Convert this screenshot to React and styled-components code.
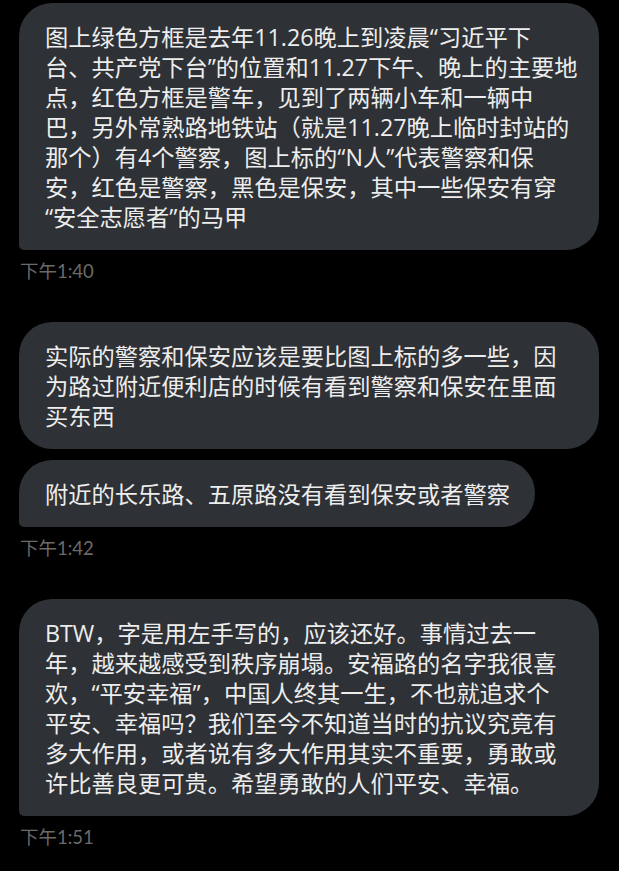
import React from "react";
import styled, { createGlobalStyle } from "styled-components";

const GlobalStyle = createGlobalStyle`
  html, body {
    margin: 0;
    padding: 0;
    background: #000;
  }
  body {
    font-family: "Open Sans", "Noto Sans CJK SC", sans-serif;
  }
`;

const groups = [
  {
    time: "下午1:40",
    messages: [
      [
        "图上绿色方框是去年11.26晚上到凌晨“习近平下",
        "台、共产党下台”的位置和11.27下午、晚上的主要地",
        "点，红色方框是警车，见到了两辆小车和一辆中",
        "巴，另外常熟路地铁站（就是11.27晚上临时封站的",
        "那个）有4个警察，图上标的“N人”代表警察和保",
        "安，红色是警察，黑色是保安，其中一些保安有穿",
        "“安全志愿者”的马甲",
      ],
    ],
  },
  {
    time: "下午1:42",
    messages: [
      [
        "实际的警察和保安应该是要比图上标的多一些，因",
        "为路过附近便利店的时候有看到警察和保安在里面",
        "买东西",
      ],
      ["附近的长乐路、五原路没有看到保安或者警察"],
    ],
  },
  {
    time: "下午1:51",
    messages: [
      [
        "BTW，字是用左手写的，应该还好。事情过去一",
        "年，越来越感受到秩序崩塌。安福路的名字我很喜",
        "欢，“平安幸福”，中国人终其一生，不也就追求个",
        "平安、幸福吗？我们至今不知道当时的抗议究竟有",
        "多大作用，或者说有多大作用其实不重要，勇敢或",
        "许比善良更可贵。希望勇敢的人们平安、幸福。",
      ],
    ],
  },
];

const App = () => {
  return (
    <>
      <GlobalStyle />
      <Page>
        {groups.map((g, gi) => (
          <Group key={gi}>
            <Bubbles>
              {g.messages.map((lines, mi) => (
                <Bubble
                  key={mi}
                  $wide={lines.length > 1}
                  $last={mi === g.messages.length - 1}
                >
                  {lines.map((l, li) => (
                    <Line key={li}>{l}</Line>
                  ))}
                </Bubble>
              ))}
            </Bubbles>
            <Time>{g.time}</Time>
          </Group>
        ))}
      </Page>
    </>
  );
};

export default App;

const Page = styled.div`
  display: flex;
  flex-direction: column;
  gap: 40px;
  padding: 3px 20px 0 19px;
`;

const Group = styled.div`
  display: flex;
  flex-direction: column;
`;

const Bubbles = styled.div`
  display: flex;
  flex-direction: column;
  align-items: flex-start;
  gap: 11px;
`;

const Bubble = styled.div`
  box-sizing: border-box;
  width: ${({ $wide }) => ($wide ? "580px" : "auto")};
  max-width: 580px;
  background: #2e3135;
  color: #ededed;
  font-size: 23.25px;
  line-height: 30px;
  padding: 19px 25px 18px 26px;
  border-radius: 33px;
  border-bottom-left-radius: ${({ $last }) => ($last ? "5px" : "33px")};
`;

const Line = styled.div`
  white-space: nowrap;
`;

const Time = styled.div`
  margin-top: 10px;
  margin-left: 1px;
  font-family: "Lato", "Noto Sans CJK SC", sans-serif;
  font-size: 18.5px;
  line-height: 22px;
  color: #6a6a6a;
`;
